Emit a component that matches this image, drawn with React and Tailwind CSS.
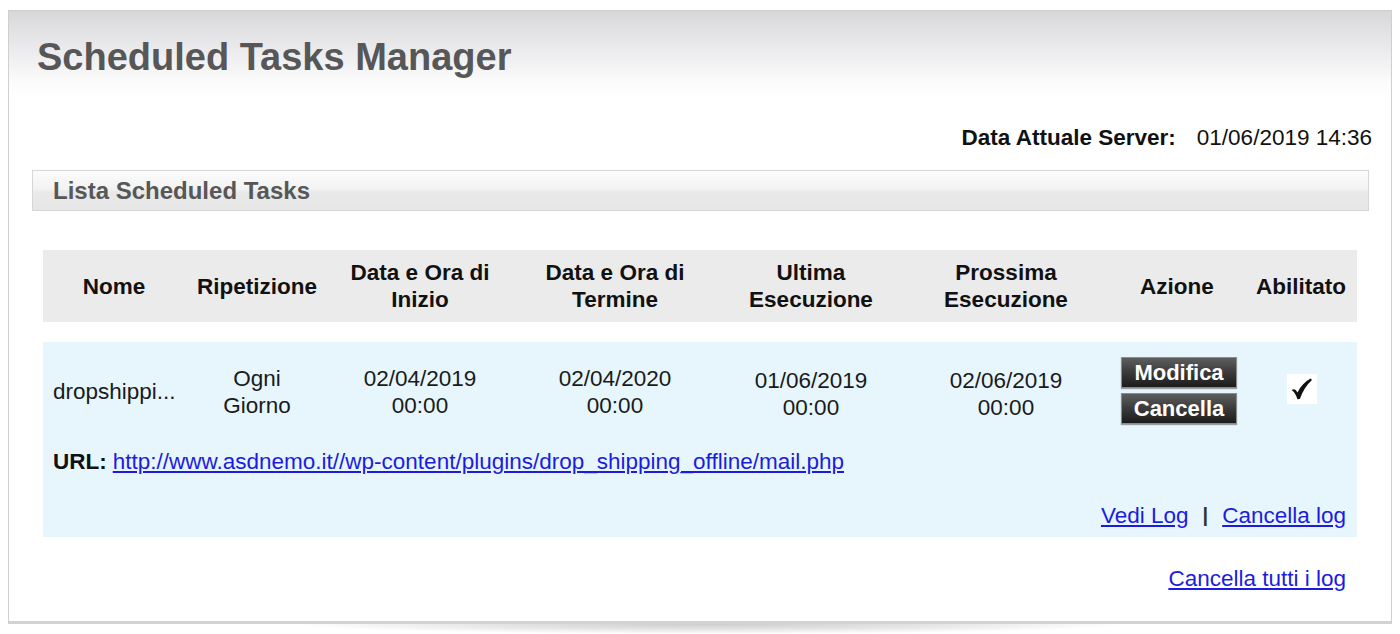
import React from "react";

const cols = "grid grid-cols-[142px_144px_182px_208px_184px_206px_136px_112px]";

function Btn({ children }) {
  return (
    <div className="w-[116px] h-[31px] flex items-center justify-center border border-[#8c8c8c] bg-[linear-gradient(to_bottom,#5e5e5e_0%,#3a3a3a_50%,#1c1c1c_100%)] text-white font-bold text-[22px] leading-none shadow-[0_1px_1px_rgba(0,0,0,0.35)]">
      {children}
    </div>
  );
}

function Check() {
  return (
    <div className="w-[30px] h-[30px] bg-white flex items-center justify-center">
      <svg width="26" height="26" viewBox="0 0 24 24">
        <path
          d="M2.5 13 C4.4 11.4 6 12 7.8 15.2 C10.8 9.4 14.8 5 20 2.4 L21.2 3.6 C16 8.2 12.6 13.8 10 21.2 L7.8 21.4 C6.4 17.4 4.6 14.6 2.5 13 Z"
          fill="#111"
        />
      </svg>
    </div>
  );
}

export default function App() {
  return (
    <div className="w-[1400px] h-[634px] bg-white overflow-hidden font-['Liberation_Sans',Arial,sans-serif]">
      <div className="ml-[8px] mt-[10px] w-[1384px] h-[614px] border border-[#cfcfcf] border-b-[3px] border-b-[#d2d2d2] bg-[linear-gradient(to_bottom,#d8d8db_0px,#ececee_40px,#fbfbfb_70px,#ffffff_88px)] flex flex-col">
        <h1 className="mt-[24px] ml-[28px] text-[38px] leading-[45px] font-bold text-[#575757]">
          Scheduled Tasks Manager
        </h1>

        <div className="mt-[44px] mr-[19px] flex justify-end gap-[21px] text-[22.5px] leading-[27px] text-[#111]">
          <span className="font-bold">Data Attuale Server:</span>
          <span>01/06/2019 14:36</span>
        </div>

        <div className="mt-[19px] ml-[23px] mr-[22px] h-[41px] border border-[#d6d6d6] bg-[linear-gradient(to_bottom,#fbfbfb_0%,#f3f3f3_45%,#e9e9e9_55%,#e6e6e6_100%)] flex items-center pl-[20px]">
          <span className="text-[24px] leading-none font-bold text-[#575757]">Lista Scheduled Tasks</span>
        </div>

        <div className="mt-[39px] ml-[34px] w-[1314px] text-[22.5px] leading-[27px]">
          <div className={`${cols} h-[72px] bg-[#ebebeb] items-center text-center font-bold text-[#111]`}>
            <div>Nome</div>
            <div>Ripetizione</div>
            <div>Data e Ora di<br />Inizio</div>
            <div>Data e Ora di<br />Termine</div>
            <div>Ultima<br />Esecuzione</div>
            <div>Prossima<br />Esecuzione</div>
            <div>Azione</div>
            <div>Abilitato</div>
          </div>

          <div className="mt-[20px] h-[195px] bg-[#e7f6fd] flex flex-col text-[#1a1a1a]">
            <div className={`${cols} mt-[15px] h-[67px] items-center text-center`}>
              <div className="text-left pl-[10px] pt-[2px]">dropshippi...</div>
              <div className="pt-[3px]">Ogni<br />Giorno</div>
              <div className="pt-[3px]">02/04/2019<br />00:00</div>
              <div className="pt-[3px]">02/04/2020<br />00:00</div>
              <div className="pt-[7px]">01/06/2019<br />00:00</div>
              <div className="pt-[7px]">02/06/2019<br />00:00</div>
              <div className="flex flex-col items-center gap-[5px] pl-[4px]">
                <Btn>Modifica</Btn>
                <Btn>Cancella</Btn>
              </div>
              <div className="flex justify-center pl-[1px] pb-[4px]">
                <Check />
              </div>
            </div>

            <div className="mt-[24px] pl-[10px] flex gap-[6px]">
              <span className="font-bold text-[#111]">URL:</span>
              <a href="#" className="text-[#1c1ce0] underline">
                http://www.asdnemo.it//wp-content/plugins/drop_shipping_offline/mail.php
              </a>
            </div>

            <div className="mt-[27px] pr-[11px] flex justify-end items-center gap-[14px]">
              <a href="#" className="text-[#1c1ce0] underline">Vedi Log</a>
              <span className="text-[#333] text-[20px] font-bold">|</span>
              <a href="#" className="text-[#1c1ce0] underline">Cancella log</a>
            </div>
          </div>

          <div className="mt-[28px] pr-[11px] flex justify-end">
            <a href="#" className="text-[#1c1ce0] underline">Cancella tutti i log</a>
          </div>
        </div>
      </div>
      <div className="ml-[300px] w-[820px] h-[10px] bg-[radial-gradient(ellipse_at_top,#cdcdcd_0%,#e6e6e6_40%,rgba(255,255,255,0)_72%)]" />
    </div>
  );
}
